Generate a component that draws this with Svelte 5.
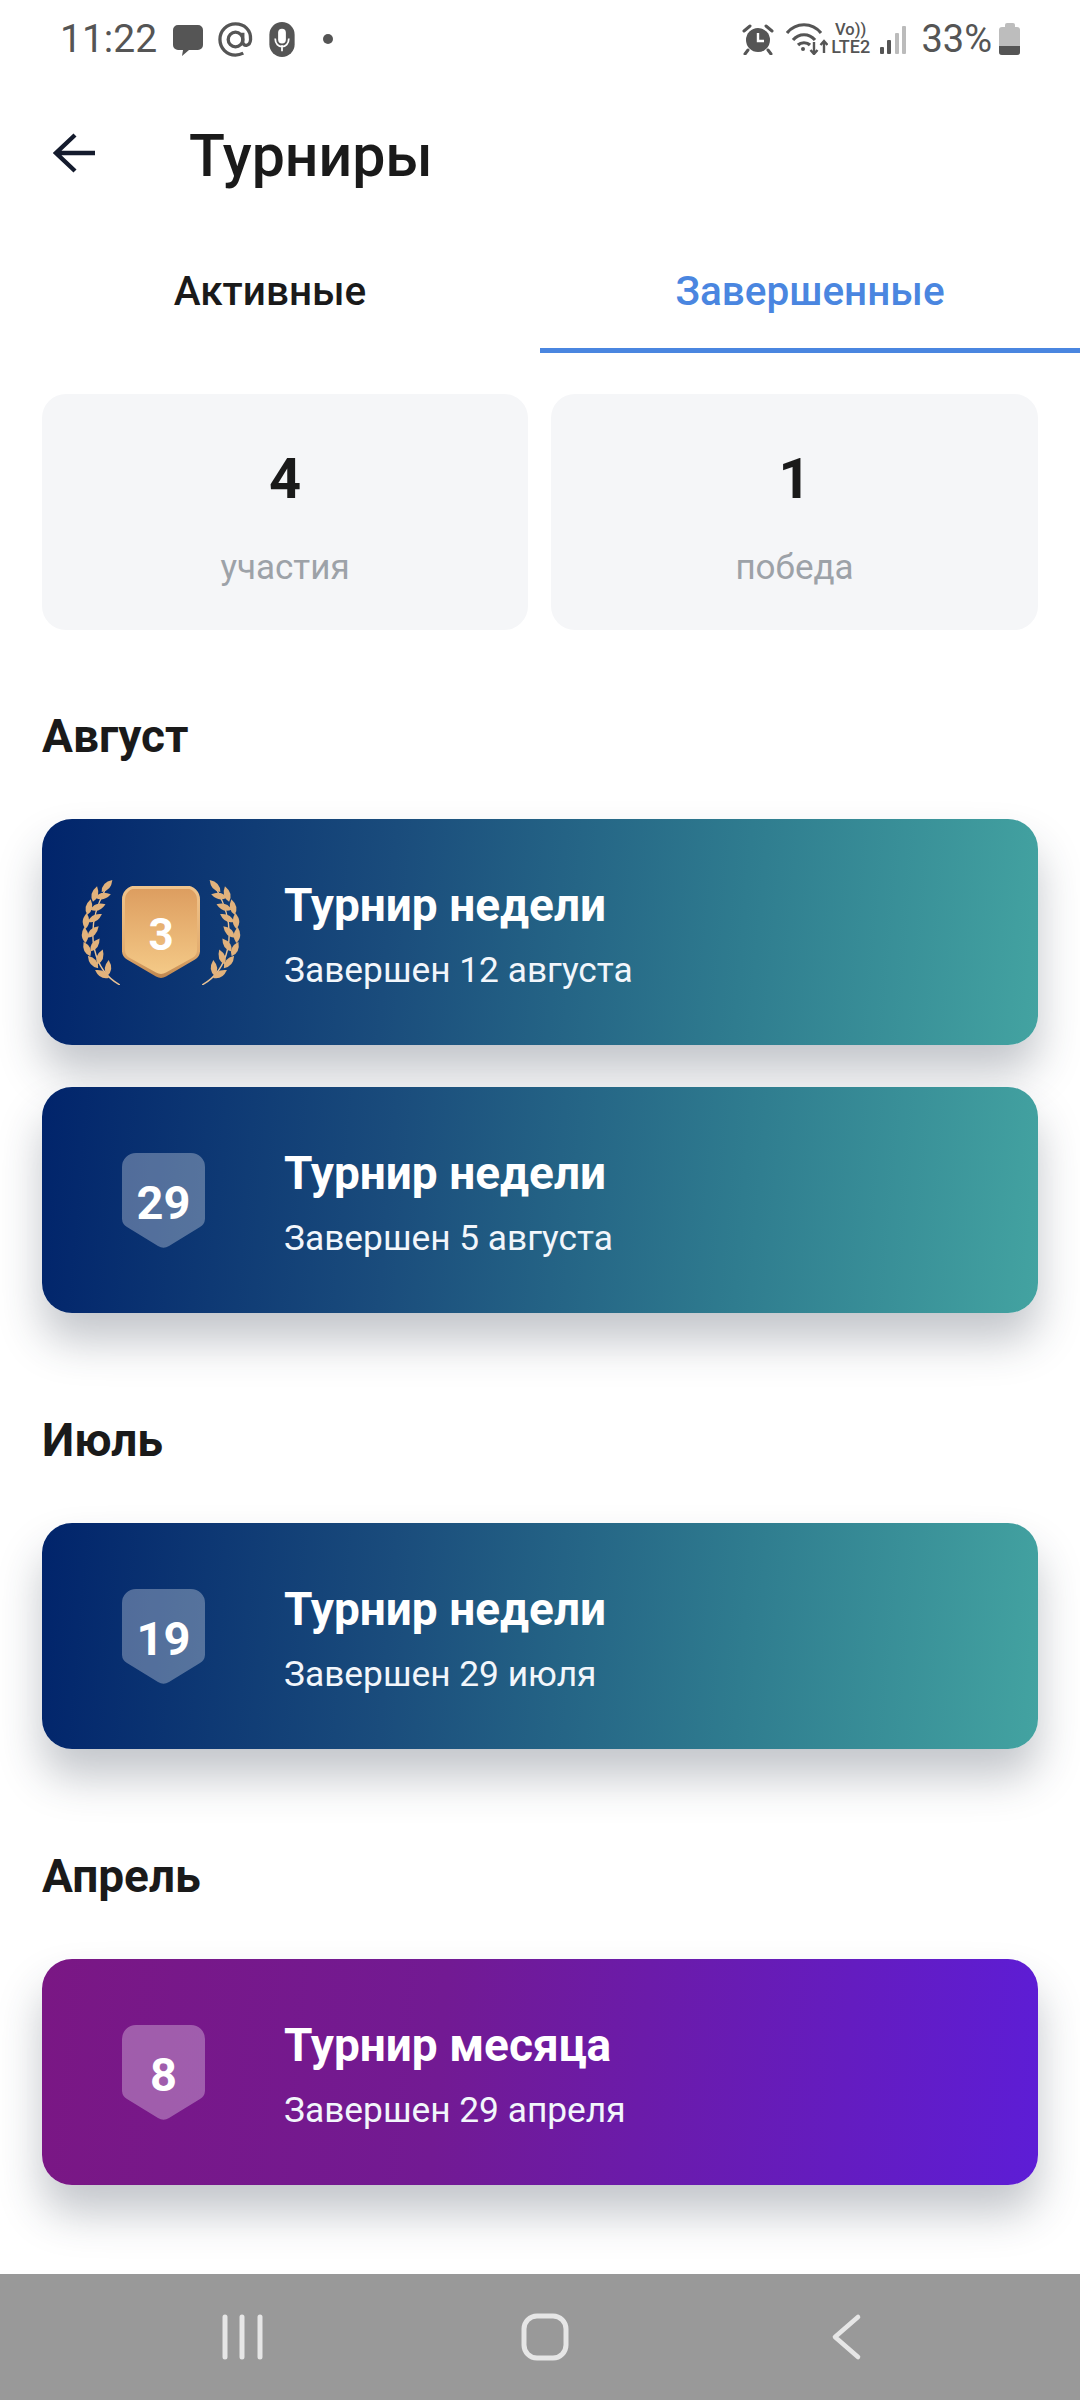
<script lang="ts">
	type Item = { place: string | number; title: string; date: string; kind: 'blue' | 'purple'; medal?: boolean };

	const groups: { month: string; items: Item[] }[] = [
		{
			month: 'Август',
			items: [
				{ place: 3, title: 'Турнир недели', date: 'Завершен 12 августа', kind: 'blue', medal: true },
				{ place: 29, title: 'Турнир недели', date: 'Завершен 5 августа', kind: 'blue' }
			]
		},
		{ month: 'Июль', items: [{ place: 19, title: 'Турнир недели', date: 'Завершен 29 июля', kind: 'blue' }] },
		{ month: 'Апрель', items: [{ place: 8, title: 'Турнир месяца', date: 'Завершен 29 апреля', kind: 'purple' }] }
	];

	// leaves of the left laurel branch: x, y, rotation
	const leaves = [
		[26, 6, -48], [14, 14, -75], [22, 16, -12], [8, 27, -78], [17, 27, -20], [5, 41, -85], [14, 38, -30],
		[4, 55, -95], [12, 52, -45], [6, 69, -115], [14, 65, -55], [12, 82, -130], [19, 77, -70], [21, 94, -150], [27, 88, -85]
	];
</script>

<div class="screen">
	<div class="status">
		<div class="status-left">
			<span class="time">11:22</span>
			<svg class="bubble" width="30" height="31" viewBox="0 0 30 31"><path d="M5 0h20a5 5 0 0 1 5 5v15a5 5 0 0 1-5 5H16l-7 6 1-6H5a5 5 0 0 1-5-5V5a5 5 0 0 1 5-5z" fill="#555" /></svg>
			<svg class="at" width="35" height="35" viewBox="0 0 36 36" fill="none" stroke="#555" stroke-width="3.4"><circle cx="18" cy="18" r="7.5" /><path d="M25.5 11v9.500c0 5 7.500 5 8-2.500C34 8 27 2 18 2S2 9 2 18s7 16 16 16c4 0 6-1 8-2" /></svg>
			<svg class="mic" width="26" height="35" viewBox="0 0 26 36"><rect width="26" height="36" rx="13" fill="#555" /><rect x="9" y="7" width="8" height="15" rx="4" fill="#fff" /><path d="M6 17c0 11 14 11 14 0M13 24v6" fill="none" stroke="#fff" stroke-width="1.8" /></svg>
			<span class="dot"></span>
		</div>
		<div class="status-right">
			<svg width="32" height="32" viewBox="0 0 32 32"><circle cx="16" cy="17" r="12" fill="#555" /><path d="M16 10v8h6" fill="none" stroke="#fff" stroke-width="2.4" /><path d="M2 8l6-5M30 8l-6-5M6 27l-3 4M26 27l3 4" stroke="#555" stroke-width="3" stroke-linecap="round" /></svg>
			<svg class="wifi" width="42" height="32" viewBox="0 0 42 32" fill="none" stroke="#555" stroke-width="3.2"><path d="M1 10c9-11 25-11 34 0M7 17c6-7 16-7 22 0M12 22c3-3 9-3 12 0" /><circle cx="17" cy="26" r="2" fill="#555" stroke="none" /><path d="M28 19v12M24.500 27l3.500 4 3.500-4M38 30V19M34.500 22l3.500-4 3.500 4" stroke-width="2.4" /></svg>
			<div class="lte"><span class="vo">Vo))</span><span class="lte2">LTE2</span></div>
			<div class="signal"><i class="s1"></i><i class="s2"></i><i class="s3"></i><i class="s4"></i></div>
			<span class="pct">33%</span>
			<div class="battery"><i class="cap"></i><i class="body"><i class="fill"></i></i></div>
		</div>
	</div>

	<header class="header">
		<svg width="42" height="40" viewBox="0 0 42 40" fill="none" stroke="#141b2d" stroke-width="4.4"><path d="M42 20H3M22 2L3 20l19 18" /></svg>
		<h1>Турниры</h1>
	</header>

	<nav class="tabs">
		<div class="tab">Активные</div>
		<div class="tab active">Завершенные</div>
	</nav>

	<main class="content">
		<section class="stats">
			<div class="stat"><b>4</b><span>участия</span></div>
			<div class="stat"><b>1</b><span>победа</span></div>
		</section>

		{#each groups as group}
			<h2>{group.month}</h2>
			<div class="list">
				{#each group.items as item}
					<div class="card {item.kind}">
						<div class="badge" class:wreath={item.medal}>
							{#if item.medal}
								{#each ['', 'flip'] as side}
									<svg class="laurel {side}" width="39" height="105" viewBox="0 0 39 105">
										<path d="M39 105C15 92 0 55 24 10" fill="none" stroke="#e9c294" stroke-width="1.4" />
										{#each leaves as [x, y, r]}
											<path d="M-8 0Q-1-6.500 8 0Q-1 6.500-8 0Z" fill="#e2b27c" transform="translate({x} {y}) rotate({r})" />
										{/each}
									</svg>
									{#if !side}
										<div class="medal"><span>{item.place}</span></div>
									{/if}
								{/each}
							{:else}
								<div class="shield"><span>{item.place}</span></div>
							{/if}
						</div>
						<div class="text">
							<div class="title">{item.title}</div>
							<div class="date">{item.date}</div>
						</div>
					</div>
				{/each}
			</div>
		{/each}
	</main>

	<footer class="navbar">
		<svg width="48" height="48" viewBox="0 0 48 48" fill="none" stroke="#e6e6e6" stroke-width="5" stroke-linecap="round"><path d="M6 4v40M23 4v40M41 4v40" /></svg>
		<svg width="48" height="48" viewBox="0 0 48 48" fill="none" stroke="#e6e6e6" stroke-width="5"><rect x="3" y="3" width="42" height="42" rx="13" /></svg>
		<svg width="40" height="48" viewBox="0 0 40 48" fill="none" stroke="#e6e6e6" stroke-width="4.6" stroke-linecap="round" stroke-linejoin="round"><path d="M36 4L13 24l23 20" /></svg>
	</footer>
</div>

<style>
	:global(body) {
		margin: 0;
		background: #fff;
	}
	.screen {
		width: 1080px;
		height: 2400px;
		display: flex;
		flex-direction: column;
		font-family: Roboto, 'Noto Sans', sans-serif;
		color: #1a1a1a;
		overflow: hidden;
	}
	.status {
		height: 78px;
		padding: 0 60px 0 60px;
		box-sizing: border-box;
		display: flex;
		justify-content: space-between;
		align-items: center;
		color: #555;
	}
	.status-left,
	.status-right {
		display: flex;
		align-items: center;
	}
	.time {
		font-size: 39px;
	}
	.bubble {
		margin-left: 16px;
		margin-top: 2px;
	}
	.at {
		margin-left: 15px;
	}
	.mic {
		margin-left: 16px;
	}
	.dot {
		width: 10px;
		height: 10px;
		border-radius: 50%;
		background: #555;
		margin-left: 28px;
	}
	.wifi {
		margin-left: 12px;
	}
	.lte {
		display: flex;
		flex-direction: column;
		align-items: center;
		line-height: 1;
		font-weight: 500;
		margin-left: 2px;
		width: 42px;
	}
	.vo {
		font-size: 16.5px;
		height: 16px;
	}
	.lte2 {
		font-size: 18px;
	}
	.signal {
		display: flex;
		align-items: flex-end;
		gap: 3.6px;
		height: 30px;
		margin-left: 8px;
	}
	.signal i {
		width: 4px;
		background: #bbb;
		border-radius: 1px;
	}
	.signal .s1 {
		height: 7px;
		background: #555;
	}
	.signal .s2 {
		height: 14px;
		background: #555;
	}
	.signal .s3 {
		height: 21px;
	}
	.signal .s4 {
		height: 28px;
	}
	.pct {
		font-size: 38px;
		margin-left: 15px;
	}
	.battery {
		display: flex;
		flex-direction: column;
		align-items: center;
		margin-left: 7px;
	}
	.battery .cap {
		width: 10px;
		height: 4px;
		background: #bdbdbd;
		border-radius: 2px 2px 0 0;
	}
	.battery .body {
		display: flex;
		align-items: flex-end;
		width: 21px;
		height: 28px;
		background: #bdbdbd;
		border-radius: 3px;
		overflow: hidden;
	}
	.battery .fill {
		width: 100%;
		height: 9px;
		background: #555;
	}
	.header {
		height: 100px;
		margin-top: 27px;
		padding-left: 53px;
		display: flex;
		align-items: center;
		gap: 94px;
	}
	.header svg {
		flex: none;
		margin-bottom: 5px;
	}
	h1 {
		margin: 0;
		font-size: 59px;
		font-weight: 500;
	}
	.tabs {
		display: flex;
		height: 148px;
		align-items: flex-end;
	}
	.tab {
		flex: 1;
		padding-bottom: 34px;
		text-align: center;
		font-size: 40.5px;
		font-weight: 500;
		line-height: 46px;
		border-bottom: 5px solid transparent;
	}
	.tab.active {
		color: #4a86e0;
		border-bottom-color: #4a86e0;
	}
	.content {
		flex: 1;
		padding: 41px 42px 0;
		overflow: hidden;
	}
	.stats {
		display: grid;
		grid-template-columns: 486px 487px;
		gap: 23px;
	}
	.stat {
		height: 236px;
		background: #f5f6f8;
		border-radius: 24px;
		display: flex;
		flex-direction: column;
		align-items: center;
		padding-top: 52px;
		box-sizing: border-box;
	}
	.stat b {
		font-size: 56px;
		font-weight: 700;
		line-height: 66px;
	}
	.stat span {
		font-size: 35px;
		color: #9da2a8;
		line-height: 40px;
		margin-top: 36px;
	}
	h2 {
		margin: 101px 0 0;
		font-size: 46px;
		font-weight: 700;
		line-height: 52px;
	}
	.stats + h2 {
		margin-top: 80px;
	}
	.list {
		margin-top: 57px;
		display: flex;
		flex-direction: column;
		gap: 42px;
	}
	.card {
		height: 226px;
		border-radius: 30px;
		display: flex;
		align-items: center;
		color: #fff;
		box-shadow: 0 28px 44px rgba(40, 50, 70, 0.28);
	}
	.card.blue {
		background: linear-gradient(95deg, #01246b 0%, #1a4c7c 35%, #2f7c8f 70%, #43a3a1 100%);
	}
	.card.purple {
		background: linear-gradient(95deg, #7a1784 0%, #721a93 40%, #5d1dd6 100%);
	}
	.badge {
		width: 243px;
		flex: none;
		display: flex;
		justify-content: center;
		align-items: center;
		gap: 2px;
		box-sizing: border-box;
	}
	.badge.wreath {
		padding-right: 5px;
	}
	.laurel.flip {
		transform: scaleX(-1);
	}
	.shield,
	.medal {
		display: flex;
		align-items: center;
		justify-content: center;
		font-weight: 700;
		color: #fff;
		box-sizing: border-box;
	}
	.shield {
		width: 83px;
		height: 96px;
		margin-top: 2px;
		background: rgba(255, 255, 255, 0.3);
		clip-path: path('M14 0H69A14 14 0 0 1 83 14V66A10 10 0 0 1 78 74L47 93A10 10 0 0 1 36 93L5 74A10 10 0 0 1 0 66V14A14 14 0 0 1 14 0Z');
		font-size: 47px;
		padding-top: 2px;
	}
	.medal {
		position: relative;
		width: 78px;
		height: 93px;
		background: linear-gradient(180deg, #f0c48c 0%, #e3ad70 70%, #bd854e 100%);
		clip-path: path('M14 0H64A14 14 0 0 1 78 14V66A10 10 0 0 1 73 74L44 91A10 10 0 0 1 34 91L5 74A10 10 0 0 1 0 66V14A14 14 0 0 1 14 0Z');
		font-size: 44px;
		padding-top: 5px;
	}
	.medal::before {
		content: '';
		position: absolute;
		inset: 3px 3px 5px;
		background: linear-gradient(180deg, #dd9e60 0%, #f4c987 100%);
		clip-path: path('M11 0H61A11 11 0 0 1 72 11V62A9 9 0 0 1 68 69L41 84A10 10 0 0 1 31 84L4 69A9 9 0 0 1 0 62V11A11 11 0 0 1 11 0Z');
	}
	.medal span {
		position: relative;
	}
	.text {
		margin-top: 4px;
		margin-left: -1px;
	}
	.title {
		font-size: 46px;
		font-weight: 700;
		line-height: 52px;
	}
	.date {
		font-size: 35.3px;
		line-height: 40px;
		margin-top: 19px;
		color: #f2f6fb;
	}
	.navbar {
		height: 126px;
		background: #999;
		flex: none;
		display: flex;
		align-items: center;
		padding: 0 218px 0 219px;
		justify-content: space-between;
	}
</style>
